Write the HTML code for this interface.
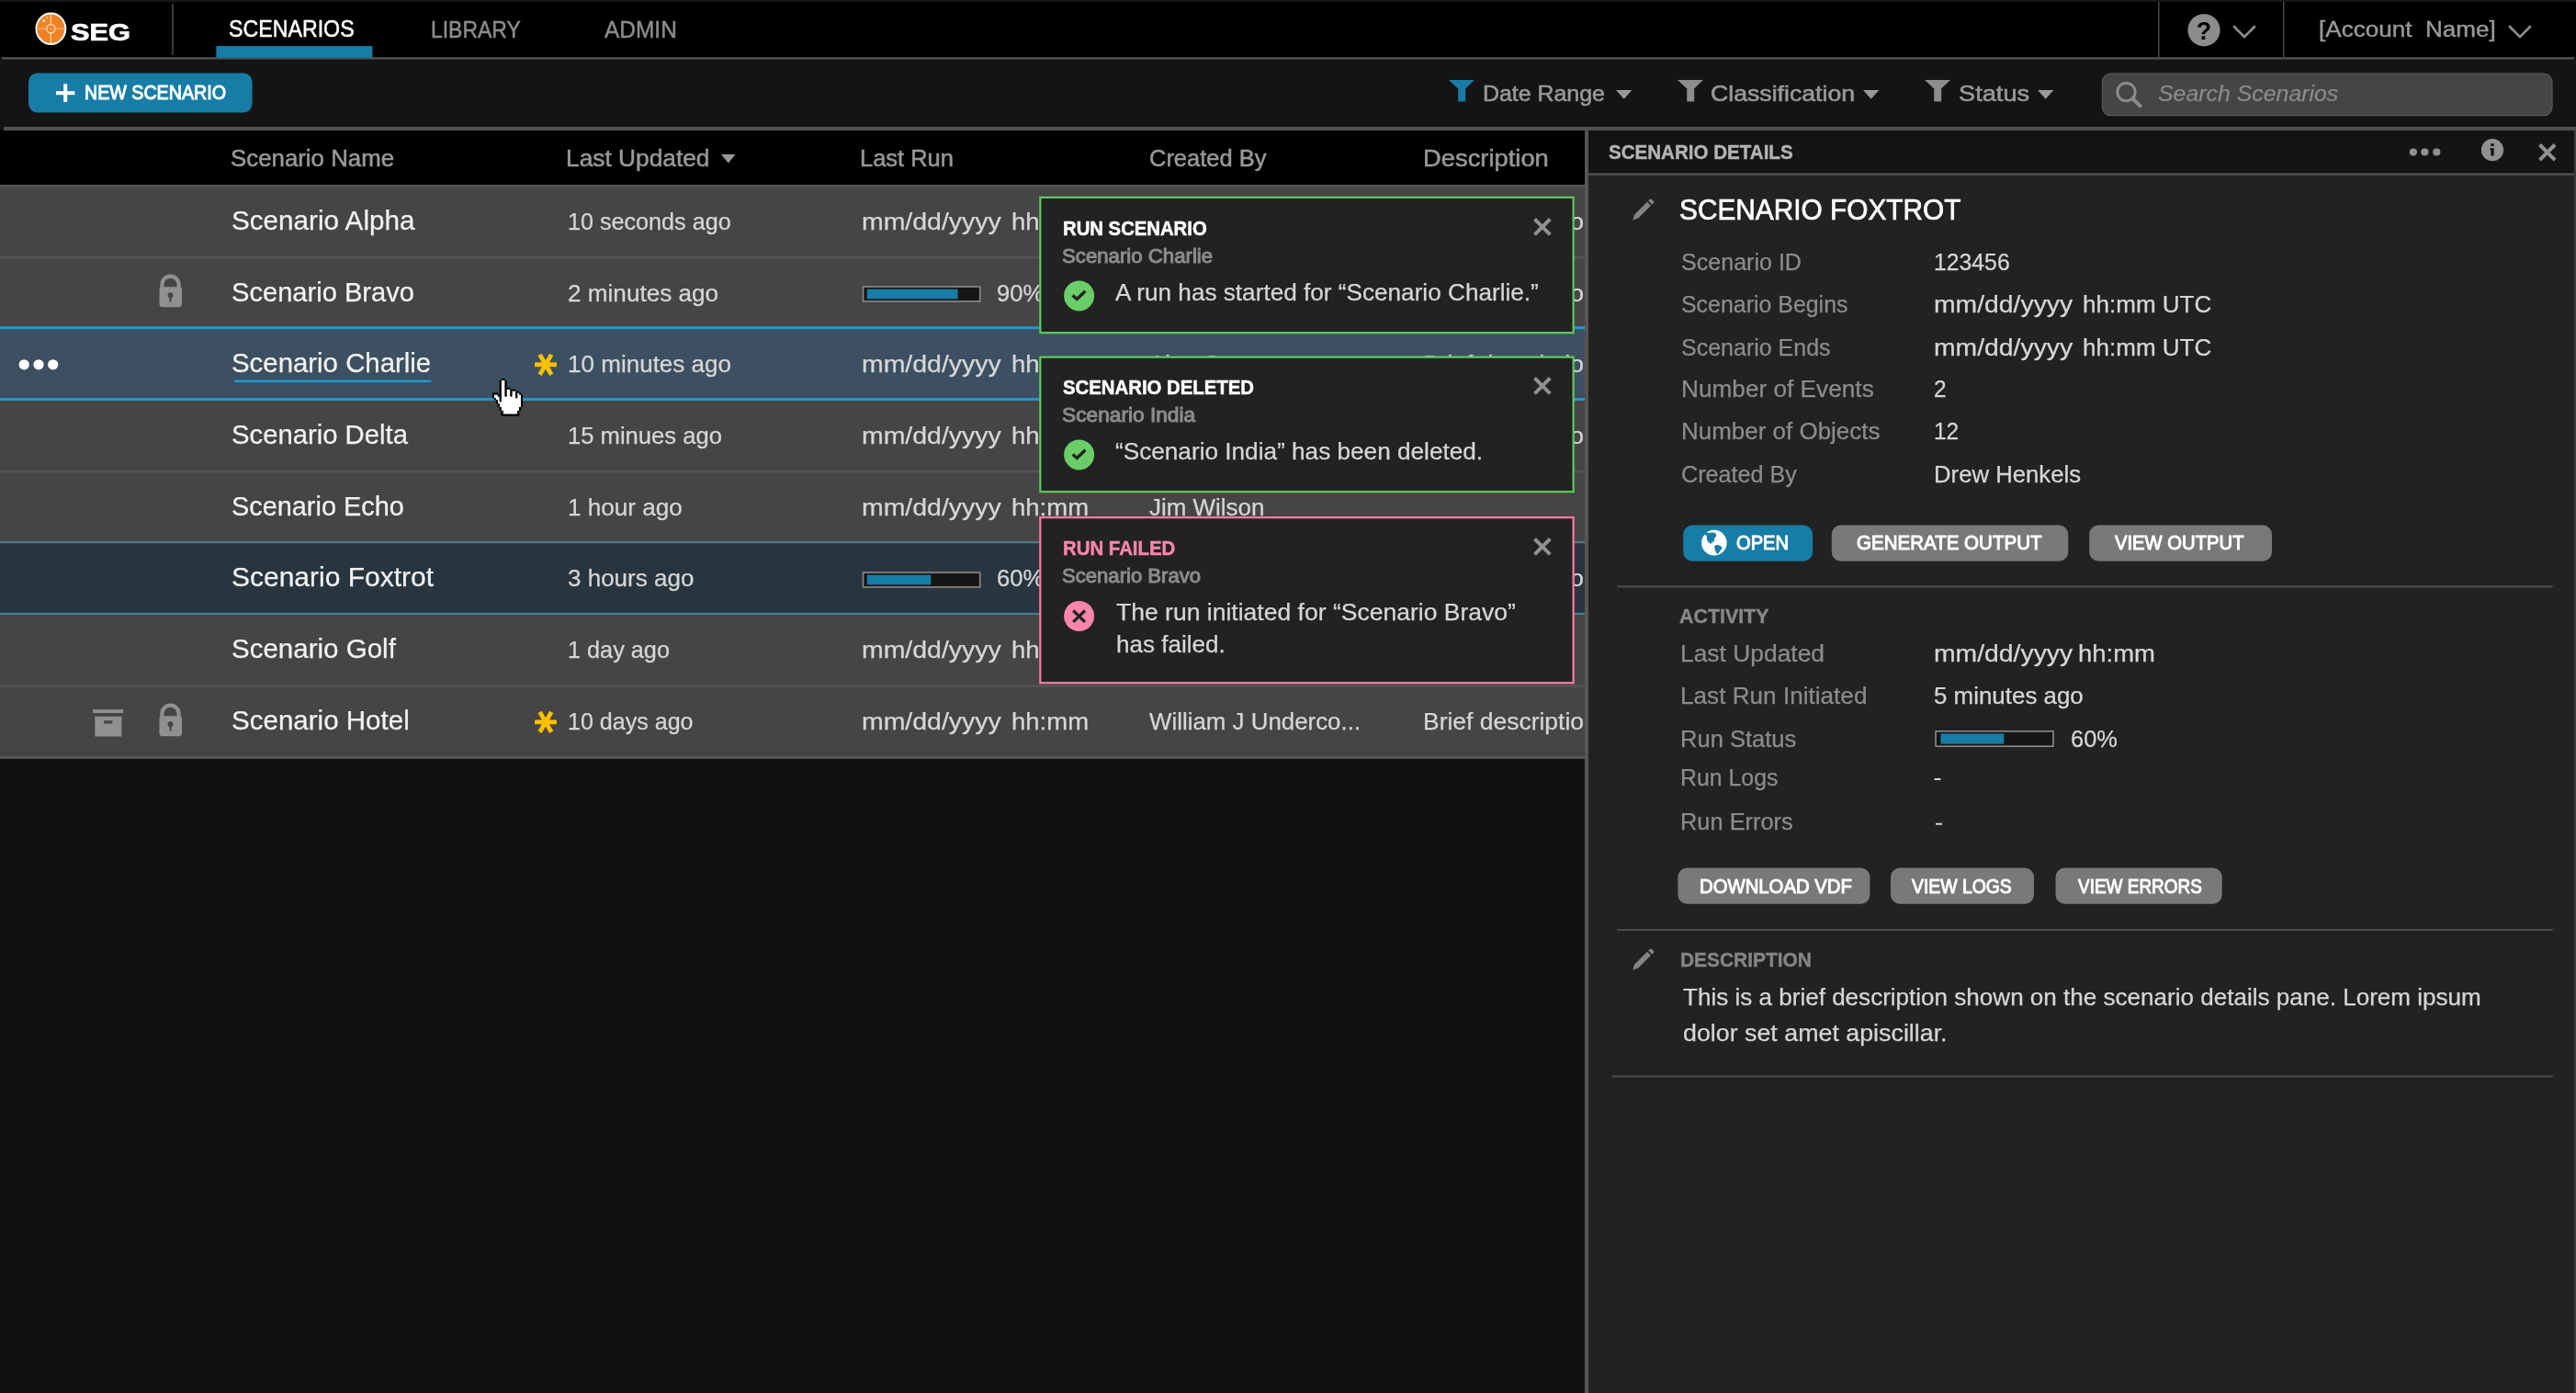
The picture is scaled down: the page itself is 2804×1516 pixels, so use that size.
<!DOCTYPE html><html><head><meta charset="utf-8"><title>Scenarios</title><style>
html,body{margin:0;padding:0;background:#111;}
body{width:2804px;height:1516px;position:relative;overflow:hidden;font-family:"Liberation Sans",sans-serif;}
.t{position:absolute;white-space:pre;line-height:1em;transform-origin:0 50%;display:block;}
svg{position:absolute;overflow:visible}
.layer{position:absolute;left:0;top:0;}
#root{position:absolute;left:0;top:0;width:2804px;height:1516px;will-change:transform;}
</style></head><body><div id="root">
<svg style="left:0px;top:0px" width="2804" height="63"><rect x="0" y="0" width="2804" height="62.3" rx="0" fill="#000"/></svg>
<svg style="left:0px;top:0px" width="2804" height="2"><rect x="0" y="0" width="2804" height="2" rx="0" fill="#181818"/></svg>
<svg style="left:2px;top:62px" width="2800" height="3"><rect x="0" y="0.2" width="2800" height="2.7" rx="0" fill="#505050"/></svg>
<svg style="left:0px;top:64px" width="2804" height="74"><rect x="0" y="0.7" width="2804" height="73.3" rx="0" fill="#141414"/></svg>
<svg style="left:4px;top:138px" width="2800" height="5"><rect x="0" y="0" width="2800" height="4.2" rx="0" fill="#505050"/></svg>
<svg style="left:0px;top:142px" width="1725" height="59"><rect x="0" y="0.2" width="1725" height="58.8" rx="0" fill="#000"/></svg>
<svg style="left:1725px;top:142px" width="5" height="1374"><rect x="0" y="0.2" width="4.2" height="1373.8" rx="0" fill="#555"/></svg>
<svg style="left:1729px;top:142px" width="1073" height="47"><rect x="0.2" y="0.2" width="1072.6" height="46.2" rx="0" fill="#141414"/></svg>
<svg style="left:1729px;top:188px" width="1073" height="3"><rect x="0.2" y="0.4" width="1072.6" height="2.5" rx="0" fill="#555"/></svg>
<svg style="left:1729px;top:190px" width="1073" height="1326"><rect x="0.2" y="0.9" width="1072.6" height="1325.1" rx="0" fill="#222"/></svg>
<svg style="left:2801px;top:142px" width="3" height="1374"><rect x="0.8" y="0.2" width="2.2" height="1373.8" rx="0" fill="#3c3c3c"/></svg>
<svg style="left:187px;top:4px" width="2" height="56"><rect x="0.2" y="0" width="1.6" height="56" rx="0" fill="#484848"/></svg>
<svg style="left:2349px;top:2px" width="2" height="60"><rect x="0" y="0" width="1.5" height="60" rx="0" fill="#484848"/></svg>
<svg style="left:2485px;top:2px" width="2" height="60"><rect x="0" y="0" width="1.5" height="60" rx="0" fill="#484848"/></svg>
<svg style="left:235px;top:50px" width="171" height="13"><rect x="0.4" y="0.1" width="169.9" height="12.7" rx="0" fill="#177ca6"/></svg>
<svg style="left:31px;top:79px" width="244" height="44"><rect x="0" y="0.4" width="243.6" height="43.2" rx="10.0" fill="#177ca6"/></svg>
<svg style="left:61px;top:99px" width="21" height="5"><rect x="0" y="0.2" width="20.4" height="4.0" rx="0" fill="#fff"/></svg>
<svg style="left:69px;top:91px" width="5" height="21"><rect x="0.2" y="0.3" width="4.0" height="19.8" rx="0" fill="#fff"/></svg>
<svg style="left:2287px;top:79px" width="492" height="48"><rect x="1.4" y="1.2" width="489.6" height="45.4" rx="9" fill="#454545" stroke="#585858" stroke-width="1.2"/></svg>
<div class="layer" style="width:1725px;height:1516px;overflow:hidden">
<svg style="left:0px;top:201px" width="1725" height="79"><rect x="0" y="0.3" width="1725" height="77.75" rx="0" fill="#454545"/></svg>
<svg style="left:0px;top:201px" width="1725" height="3"><rect x="0" y="0.0" width="1725" height="2.6" rx="0" fill="#555"/></svg>
<svg style="left:0px;top:279px" width="1725" height="78"><rect x="0" y="0.05" width="1725" height="77.75" rx="0" fill="#454545"/></svg>
<svg style="left:0px;top:278px" width="1725" height="4"><rect x="0" y="0.75" width="1725" height="2.6" rx="0" fill="#555"/></svg>
<svg style="left:0px;top:356px" width="1725" height="79"><rect x="0" y="0.8" width="1725" height="77.75" rx="0" fill="#454545"/></svg>
<svg style="left:0px;top:356px" width="1725" height="4"><rect x="0" y="0.5" width="1725" height="2.6" rx="0" fill="#555"/></svg>
<svg style="left:0px;top:434px" width="1725" height="79"><rect x="0" y="0.55" width="1725" height="77.75" rx="0" fill="#454545"/></svg>
<svg style="left:0px;top:512px" width="1725" height="79"><rect x="0" y="0.3" width="1725" height="77.75" rx="0" fill="#454545"/></svg>
<svg style="left:0px;top:511px" width="1725" height="4"><rect x="0" y="1.0" width="1725" height="2.6" rx="0" fill="#555"/></svg>
<svg style="left:0px;top:590px" width="1725" height="78"><rect x="0" y="0.05" width="1725" height="77.75" rx="0" fill="#454545"/></svg>
<svg style="left:0px;top:589px" width="1725" height="4"><rect x="0" y="0.75" width="1725" height="2.6" rx="0" fill="#555"/></svg>
<svg style="left:0px;top:667px" width="1725" height="79"><rect x="0" y="0.8" width="1725" height="77.75" rx="0" fill="#454545"/></svg>
<svg style="left:0px;top:745px" width="1725" height="79"><rect x="0" y="0.55" width="1725" height="77.75" rx="0" fill="#454545"/></svg>
<svg style="left:0px;top:745px" width="1725" height="3"><rect x="0" y="0.25" width="1725" height="2.6" rx="0" fill="#555"/></svg>
<svg style="left:0px;top:823px" width="1725" height="3"><rect x="0" y="0.0" width="1725" height="2.9" rx="0" fill="#555"/></svg>
<svg style="left:0px;top:355px" width="1725" height="81"><rect x="0" y="0.3" width="1725" height="80.7" rx="0" fill="#3d5061"/></svg>
<svg style="left:0px;top:355px" width="1725" height="4"><rect x="0" y="0.3" width="1725" height="2.9" rx="0" fill="#209bd5"/></svg>
<svg style="left:0px;top:433px" width="1725" height="3"><rect x="0" y="0.1" width="1725" height="2.9" rx="0" fill="#209bd5"/></svg>
<svg style="left:0px;top:589px" width="1725" height="81"><rect x="0" y="0.05" width="1725" height="80.05" rx="0" fill="#28353f"/></svg>
<svg style="left:0px;top:589px" width="1725" height="3"><rect x="0" y="0.05" width="1725" height="2.2" rx="0" fill="#4a7d90"/></svg>
<svg style="left:0px;top:666px" width="1725" height="4"><rect x="0" y="0.9" width="1725" height="2.2" rx="0" fill="#4a7d90"/></svg><svg style="left:173px;top:299.3px" width="26" height="36" viewBox="0 0 26 36"><path d="M3.4 16 V10.7 A9.1 9.1 0 0 1 21.6 10.7 V16" fill="none" stroke="#909090" stroke-width="4.2"/><rect x="0.5" y="13.3" width="24.6" height="21.9" rx="3.4" fill="#909090"/><circle cx="12.5" cy="22.2" r="2.9" fill="#454545"/><path d="M11.2 23 H13.8 L13.4 29.8 H11.6Z" fill="#454545"/></svg>
<svg style="left:173px;top:765.8px" width="26" height="36" viewBox="0 0 26 36"><path d="M3.4 16 V10.7 A9.1 9.1 0 0 1 21.6 10.7 V16" fill="none" stroke="#909090" stroke-width="4.2"/><rect x="0.5" y="13.3" width="24.6" height="21.9" rx="3.4" fill="#909090"/><circle cx="12.5" cy="22.2" r="2.9" fill="#454545"/><path d="M11.2 23 H13.8 L13.4 29.8 H11.6Z" fill="#454545"/></svg>
<svg style="left:101px;top:771.7px" width="34" height="30" viewBox="0 0 34 30"><rect x="0.2" y="0.1" width="33" height="3.9" fill="#909090"/><path d="M2.3 7.8 H31.4 V29.4 H2.3Z M12 12.2 V15.4 H21.4 V12.2Z" fill="#909090" fill-rule="evenodd"/></svg>
<svg style="left:582px;top:385px" width="24" height="24" viewBox="0 0 24 24"><g stroke="#ffc000" stroke-width="4.8"><line x1="0.1" y1="11.8" x2="23.9" y2="11.8"/><line x1="5.6" y1="0.9" x2="18.2" y2="22.7"/><line x1="18.2" y1="0.9" x2="5.6" y2="22.7"/></g></svg>
<svg style="left:582px;top:774.2px" width="24" height="24" viewBox="0 0 24 24"><g stroke="#ffc000" stroke-width="4.8"><line x1="0.1" y1="11.8" x2="23.9" y2="11.8"/><line x1="5.6" y1="0.9" x2="18.2" y2="22.7"/><line x1="18.2" y1="0.9" x2="5.6" y2="22.7"/></g></svg>
<svg style="left:18px;top:388px" width="50" height="18" viewBox="0 0 50 18"><circle cx="8.2" cy="8.8" r="5.6" fill="#fff"/><circle cx="24" cy="8.8" r="5.6" fill="#fff"/><circle cx="39.7" cy="8.8" r="5.6" fill="#fff"/></svg>
<svg style="left:255px;top:413px" width="215" height="3"><rect x="0" y="0.6" width="214.5" height="2.4" rx="0" fill="#1f9bd6"/></svg>
<svg style="left:938px;top:311px" width="130" height="18"><rect x="1.55" y="1.05" width="127.15" height="15.9" rx="0" fill="#161616" stroke="#8c8c8c" stroke-width="1.6"/></svg><svg style="left:943px;top:314px" width="100" height="12"><rect x="0.75" y="0.65" width="98.75" height="10.7" rx="0" fill="#177ca6"/></svg>
<svg style="left:938px;top:622px" width="130" height="18"><rect x="1.55" y="1.05" width="127.15" height="15.9" rx="0" fill="#161616" stroke="#8c8c8c" stroke-width="1.6"/></svg><svg style="left:943px;top:625px" width="71" height="12"><rect x="0.75" y="0.65" width="69.45" height="10.7" rx="0" fill="#177ca6"/></svg>
<span class="t" style="left:252.17px;top:224.85px;font-size:29.71px;color:#f2f2f2;font-weight:400;font-style:normal;transform:scaleX(0.9981);-webkit-text-stroke:0.25px #f2f2f2;">Scenario Alpha</span>
<span class="t" style="left:252.17px;top:302.56px;font-size:29.71px;color:#f2f2f2;font-weight:400;font-style:normal;transform:scaleX(0.9797);-webkit-text-stroke:0.25px #f2f2f2;">Scenario Bravo</span>
<span class="t" style="left:252.17px;top:380.27px;font-size:29.71px;color:#f2f2f2;font-weight:400;font-style:normal;transform:scaleX(0.9892);-webkit-text-stroke:0.25px #f2f2f2;">Scenario Charlie</span>
<span class="t" style="left:252.17px;top:457.98px;font-size:29.71px;color:#f2f2f2;font-weight:400;font-style:normal;transform:scaleX(0.9850);-webkit-text-stroke:0.25px #f2f2f2;">Scenario Delta</span>
<span class="t" style="left:252.17px;top:535.69px;font-size:29.71px;color:#f2f2f2;font-weight:400;font-style:normal;transform:scaleX(0.9721);-webkit-text-stroke:0.25px #f2f2f2;">Scenario Echo</span>
<span class="t" style="left:252.17px;top:613.4px;font-size:29.71px;color:#f2f2f2;font-weight:400;font-style:normal;transform:scaleX(1.0097);-webkit-text-stroke:0.25px #f2f2f2;">Scenario Foxtrot</span>
<span class="t" style="left:252.17px;top:691.11px;font-size:29.71px;color:#f2f2f2;font-weight:400;font-style:normal;transform:scaleX(0.9937);-webkit-text-stroke:0.25px #f2f2f2;">Scenario Golf</span>
<span class="t" style="left:252.17px;top:768.82px;font-size:29.71px;color:#f2f2f2;font-weight:400;font-style:normal;transform:scaleX(0.9942);-webkit-text-stroke:0.25px #f2f2f2;">Scenario Hotel</span>
<span class="t" style="left:618.22px;top:228.79px;font-size:25.07px;color:#d6d6d6;font-weight:400;font-style:normal;transform:scaleX(1.0037);-webkit-text-stroke:0.25px #d6d6d6;">10 seconds ago</span>
<span class="t" style="left:618.22px;top:306.5px;font-size:25.07px;color:#d6d6d6;font-weight:400;font-style:normal;transform:scaleX(1.0424);-webkit-text-stroke:0.25px #d6d6d6;">2 minutes ago</span>
<span class="t" style="left:618.22px;top:384.21px;font-size:25.07px;color:#d6d6d6;font-weight:400;font-style:normal;transform:scaleX(1.0389);-webkit-text-stroke:0.25px #d6d6d6;">10 minutes ago</span>
<span class="t" style="left:618.22px;top:461.92px;font-size:25.07px;color:#d6d6d6;font-weight:400;font-style:normal;transform:scaleX(1.0211);-webkit-text-stroke:0.25px #d6d6d6;">15 minues ago</span>
<span class="t" style="left:618.22px;top:539.63px;font-size:25.07px;color:#d6d6d6;font-weight:400;font-style:normal;transform:scaleX(1.0422);-webkit-text-stroke:0.25px #d6d6d6;">1 hour ago</span>
<span class="t" style="left:618.22px;top:617.34px;font-size:25.07px;color:#d6d6d6;font-weight:400;font-style:normal;transform:scaleX(1.0376);-webkit-text-stroke:0.25px #d6d6d6;">3 hours ago</span>
<span class="t" style="left:618.22px;top:695.05px;font-size:25.07px;color:#d6d6d6;font-weight:400;font-style:normal;transform:scaleX(1.0078);-webkit-text-stroke:0.25px #d6d6d6;">1 day ago</span>
<span class="t" style="left:618.22px;top:772.76px;font-size:25.07px;color:#d6d6d6;font-weight:400;font-style:normal;transform:scaleX(0.9997);-webkit-text-stroke:0.25px #d6d6d6;">10 days ago</span>
<span class="t" style="left:937.62px;top:228.79px;font-size:25.07px;color:#d6d6d6;font-weight:400;font-style:normal;transform:scaleX(1.1344);-webkit-text-stroke:0.25px #d6d6d6;">mm/dd/yyyy</span>
<span class="t" style="left:1100.82px;top:228.79px;font-size:25.07px;color:#d6d6d6;font-weight:400;font-style:normal;transform:scaleX(1.0982);-webkit-text-stroke:0.25px #d6d6d6;">hh:mm</span>
<span class="t" style="left:937.62px;top:384.21px;font-size:25.07px;color:#d6d6d6;font-weight:400;font-style:normal;transform:scaleX(1.1344);-webkit-text-stroke:0.25px #d6d6d6;">mm/dd/yyyy</span>
<span class="t" style="left:1100.82px;top:384.21px;font-size:25.07px;color:#d6d6d6;font-weight:400;font-style:normal;transform:scaleX(1.0982);-webkit-text-stroke:0.25px #d6d6d6;">hh:mm</span>
<span class="t" style="left:937.62px;top:461.92px;font-size:25.07px;color:#d6d6d6;font-weight:400;font-style:normal;transform:scaleX(1.1344);-webkit-text-stroke:0.25px #d6d6d6;">mm/dd/yyyy</span>
<span class="t" style="left:1100.82px;top:461.92px;font-size:25.07px;color:#d6d6d6;font-weight:400;font-style:normal;transform:scaleX(1.0982);-webkit-text-stroke:0.25px #d6d6d6;">hh:mm</span>
<span class="t" style="left:937.62px;top:539.63px;font-size:25.07px;color:#d6d6d6;font-weight:400;font-style:normal;transform:scaleX(1.1344);-webkit-text-stroke:0.25px #d6d6d6;">mm/dd/yyyy</span>
<span class="t" style="left:1100.82px;top:539.63px;font-size:25.07px;color:#d6d6d6;font-weight:400;font-style:normal;transform:scaleX(1.0982);-webkit-text-stroke:0.25px #d6d6d6;">hh:mm</span>
<span class="t" style="left:937.62px;top:695.05px;font-size:25.07px;color:#d6d6d6;font-weight:400;font-style:normal;transform:scaleX(1.1344);-webkit-text-stroke:0.25px #d6d6d6;">mm/dd/yyyy</span>
<span class="t" style="left:1100.82px;top:695.05px;font-size:25.07px;color:#d6d6d6;font-weight:400;font-style:normal;transform:scaleX(1.0982);-webkit-text-stroke:0.25px #d6d6d6;">hh:mm</span>
<span class="t" style="left:937.62px;top:772.76px;font-size:25.07px;color:#d6d6d6;font-weight:400;font-style:normal;transform:scaleX(1.1344);-webkit-text-stroke:0.25px #d6d6d6;">mm/dd/yyyy</span>
<span class="t" style="left:1100.82px;top:772.76px;font-size:25.07px;color:#d6d6d6;font-weight:400;font-style:normal;transform:scaleX(1.0982);-webkit-text-stroke:0.25px #d6d6d6;">hh:mm</span>
<span class="t" style="left:1250.62px;top:228.79px;font-size:25.07px;color:#d6d6d6;font-weight:400;font-style:normal;transform:scaleX(1.0352);-webkit-text-stroke:0.25px #d6d6d6;">Jim Wilson</span>
<span class="t" style="left:1548.62px;top:228.79px;font-size:25.07px;color:#d6d6d6;font-weight:400;font-style:normal;transform:scaleX(1.0558);-webkit-text-stroke:0.25px #d6d6d6;">Brief descriptio</span>
<span class="t" style="left:1250.62px;top:306.5px;font-size:25.07px;color:#d6d6d6;font-weight:400;font-style:normal;transform:scaleX(1.0273);-webkit-text-stroke:0.25px #d6d6d6;">Drew Henkels</span>
<span class="t" style="left:1548.62px;top:306.5px;font-size:25.07px;color:#d6d6d6;font-weight:400;font-style:normal;transform:scaleX(1.0558);-webkit-text-stroke:0.25px #d6d6d6;">Brief descriptio</span>
<span class="t" style="left:1250.62px;top:384.21px;font-size:25.07px;color:#d6d6d6;font-weight:400;font-style:normal;transform:scaleX(1.0257);-webkit-text-stroke:0.25px #d6d6d6;">Alan Green</span>
<span class="t" style="left:1548.62px;top:384.21px;font-size:25.07px;color:#d6d6d6;font-weight:400;font-style:normal;transform:scaleX(1.0558);-webkit-text-stroke:0.25px #d6d6d6;">Brief descriptio</span>
<span class="t" style="left:1250.62px;top:461.92px;font-size:25.07px;color:#d6d6d6;font-weight:400;font-style:normal;transform:scaleX(1.0352);-webkit-text-stroke:0.25px #d6d6d6;">Jim Wilson</span>
<span class="t" style="left:1548.62px;top:461.92px;font-size:25.07px;color:#d6d6d6;font-weight:400;font-style:normal;transform:scaleX(1.0558);-webkit-text-stroke:0.25px #d6d6d6;">Brief descriptio</span>
<span class="t" style="left:1250.62px;top:539.63px;font-size:25.07px;color:#d6d6d6;font-weight:400;font-style:normal;transform:scaleX(1.0352);-webkit-text-stroke:0.25px #d6d6d6;">Jim Wilson</span>
<span class="t" style="left:1250.62px;top:617.34px;font-size:25.07px;color:#d6d6d6;font-weight:400;font-style:normal;transform:scaleX(1.0273);-webkit-text-stroke:0.25px #d6d6d6;">Drew Henkels</span>
<span class="t" style="left:1548.62px;top:617.34px;font-size:25.07px;color:#d6d6d6;font-weight:400;font-style:normal;transform:scaleX(1.0558);-webkit-text-stroke:0.25px #d6d6d6;">Brief descriptio</span>
<span class="t" style="left:1250.62px;top:695.05px;font-size:25.07px;color:#d6d6d6;font-weight:400;font-style:normal;transform:scaleX(1.0384);-webkit-text-stroke:0.25px #d6d6d6;">Sara Cole</span>
<span class="t" style="left:1250.62px;top:772.76px;font-size:25.07px;color:#d6d6d6;font-weight:400;font-style:normal;transform:scaleX(1.0326);-webkit-text-stroke:0.25px #d6d6d6;">William J Underco...</span>
<span class="t" style="left:1548.62px;top:772.76px;font-size:25.07px;color:#d6d6d6;font-weight:400;font-style:normal;transform:scaleX(1.0558);-webkit-text-stroke:0.25px #d6d6d6;">Brief descriptio</span>
<span class="t" style="left:1084.62px;top:306.5px;font-size:25.07px;color:#d6d6d6;font-weight:400;font-style:normal;transform:scaleX(1.0202);-webkit-text-stroke:0.25px #d6d6d6;">90%</span>
<span class="t" style="left:1084.62px;top:617.34px;font-size:25.07px;color:#d6d6d6;font-weight:400;font-style:normal;transform:scaleX(1.0202);-webkit-text-stroke:0.25px #d6d6d6;">60%</span>
<span class="t" style="left:250.6px;top:160.22px;font-size:25.51px;color:#999;font-weight:400;font-style:normal;transform:scaleX(1.0130);-webkit-text-stroke:0.5px #999;">Scenario Name</span>
<span class="t" style="left:616.1px;top:160.22px;font-size:25.51px;color:#999;font-weight:400;font-style:normal;transform:scaleX(1.0315);-webkit-text-stroke:0.5px #999;">Last Updated</span>
<span class="t" style="left:936.1px;top:160.22px;font-size:25.51px;color:#999;font-weight:400;font-style:normal;transform:scaleX(0.9979);-webkit-text-stroke:0.5px #999;">Last Run</span>
<span class="t" style="left:1251.1px;top:160.22px;font-size:25.51px;color:#999;font-weight:400;font-style:normal;transform:scaleX(0.9984);-webkit-text-stroke:0.5px #999;">Created By</span>
<span class="t" style="left:1548.6px;top:160.22px;font-size:25.51px;color:#999;font-weight:400;font-style:normal;transform:scaleX(1.0726);-webkit-text-stroke:0.5px #999;">Description</span>
</div>
<svg style="left:38px;top:13px" width="36" height="36" viewBox="0 0 36 36"><ellipse cx="17.4" cy="18.3" rx="15.9" ry="16.8" fill="#f08222" stroke="#fff" stroke-width="2"/>
<g stroke="#fbd9b8" stroke-width="1.2" fill="none"><line x1="17.4" y1="2.5" x2="17.4" y2="13.5"/><line x1="17.4" y1="23" x2="17.4" y2="34"/><line x1="2.5" y1="18.2" x2="12.6" y2="18.2" stroke="#f7b078"/><line x1="22.2" y1="18.2" x2="32.5" y2="18.2" stroke="#f7b078"/><circle cx="17.4" cy="18.2" r="4.6" stroke="#fde6d0" stroke-width="1.3"/><path d="M8 6.5 A15 15 0 0 0 8 30" stroke="#f7b078" stroke-width="1"/></g><circle cx="9.8" cy="9.4" r="1.5" fill="#fde6d0"/><circle cx="13.6" cy="6.4" r="0.9" fill="#fbd3ad"/><circle cx="17.4" cy="18.2" r="1.3" fill="#f7b078"/></svg>
<svg style="left:2381px;top:15.4px" width="36" height="36" viewBox="0 0 36 36"><circle cx="18" cy="17.8" r="17.6" fill="#8c8c8c"/><text x="18" y="27.5" font-family="Liberation Sans" font-weight="700" font-size="27" text-anchor="middle" fill="#000">?</text></svg>
<svg style="left:2428px;top:24px" width="32" height="22" viewBox="0 0 32 22"><polyline points="3.2,4.3 15,16.2 26.8,4.3" fill="none" stroke="#8c8c8c" stroke-width="2.7"/></svg>
<svg style="left:2727.8px;top:24px" width="32" height="22" viewBox="0 0 32 22"><polyline points="3.2,4.3 15,16.2 26.8,4.3" fill="none" stroke="#8c8c8c" stroke-width="2.7"/></svg>
<svg style="left:1577px;top:87.4px" width="28" height="24" viewBox="0 0 28 24"><path d="M0 0 H28 L18.2 9.6 V23.6 H10.2 V9.6 Z" fill="#177ca6"/></svg>
<svg style="left:1825.7px;top:87.4px" width="28" height="24" viewBox="0 0 28 24"><path d="M0 0 H28 L18.2 9.6 V23.6 H10.2 V9.6 Z" fill="#8c8c8c"/></svg>
<svg style="left:2095px;top:87.4px" width="28" height="24" viewBox="0 0 28 24"><path d="M0 0 H28 L18.2 9.6 V23.6 H10.2 V9.6 Z" fill="#8c8c8c"/></svg>
<svg style="left:1758.5px;top:97.6px" width="17.4" height="9.7" viewBox="0 0 17.4 9.7"><path d="M0 0 H17.4 L8.7 9.7Z" fill="#999"/></svg>
<svg style="left:2027.7px;top:97.6px" width="17.4" height="9.7" viewBox="0 0 17.4 9.7"><path d="M0 0 H17.4 L8.7 9.7Z" fill="#999"/></svg>
<svg style="left:2218.3px;top:97.6px" width="17.4" height="9.7" viewBox="0 0 17.4 9.7"><path d="M0 0 H17.4 L8.7 9.7Z" fill="#999"/></svg>
<svg style="left:784.5px;top:167.5px" width="15.5" height="9.5" viewBox="0 0 15.5 9.5"><path d="M0 0 H15.5 L7.75 9.5Z" fill="#999"/></svg>
<svg style="left:2303px;top:88px" width="30" height="30" viewBox="0 0 30 30"><circle cx="11.5" cy="12.2" r="9.7" fill="none" stroke="#8c8c8c" stroke-width="2.9"/><line x1="18.6" y1="19.4" x2="26.6" y2="27.4" stroke="#8c8c8c" stroke-width="4" stroke-linecap="round"/></svg>
<svg style="left:2620px;top:158px" width="40" height="16" viewBox="0 0 40 16"><circle cx="6.9" cy="7.5" r="4.1" fill="#909090"/><circle cx="19.4" cy="7.5" r="4.1" fill="#909090"/><circle cx="32.3" cy="7.5" r="4.1" fill="#909090"/></svg>
<svg style="left:2700px;top:151px" width="26" height="26" viewBox="0 0 26 26"><circle cx="13" cy="12.2" r="12.1" fill="#909090"/><rect x="11.2" y="5.2" width="3.4" height="2.9" fill="#141414"/><path d="M10.3 10.2 H14.7 V18.4 H11.3 V12 H10.3Z" fill="#141414"/></svg>
<svg style="left:2763px;top:156px" width="19.6" height="19.6" viewBox="0 0 19.6 19.6"><path d="M1.5 1.5 L18.1 18.1 M18.1 1.5 L1.5 18.1" stroke="#909090" stroke-width="4.1" fill="none"/></svg>
<svg style="left:1777.4px;top:215.7px" width="24" height="24" viewBox="0 0 24 24"><path d="M0.2 23.6 L2.2 17.6 L16 3.8 L20 7.8 L6.2 21.6 Z M17.2 2.6 L18.9 0.9 Q19.9 0 20.9 0.9 L22.9 2.9 Q23.8 3.9 22.9 4.9 L21.2 6.6 Z" fill="#858585"/></svg>
<svg style="left:1777.4px;top:1032.4px" width="24" height="24" viewBox="0 0 24 24"><path d="M0.2 23.6 L2.2 17.6 L16 3.8 L20 7.8 L6.2 21.6 Z M17.2 2.6 L18.9 0.9 Q19.9 0 20.9 0.9 L22.9 2.9 Q23.8 3.9 22.9 4.9 L21.2 6.6 Z" fill="#858585"/></svg>
<svg style="left:1832px;top:571px" width="142" height="40"><rect x="0.2" y="0.6" width="140.9" height="39.1" rx="10.0" fill="#177ca6"/></svg>
<svg style="left:1993px;top:571px" width="259" height="40"><rect x="0.75" y="0.6" width="257.5" height="39.1" rx="10.0" fill="#797979"/></svg>
<svg style="left:2274px;top:571px" width="199" height="40"><rect x="0.25" y="0.6" width="198.75" height="39.1" rx="10.0" fill="#797979"/></svg>
<svg style="left:1826px;top:944px" width="210" height="40"><rect x="0.4" y="0.6" width="209.0" height="39.2" rx="10.0" fill="#797979"/></svg>
<svg style="left:2058px;top:944px" width="156" height="40"><rect x="0" y="0.6" width="156" height="39.2" rx="10.0" fill="#797979"/></svg>
<svg style="left:2237px;top:944px" width="182" height="40"><rect x="0.5" y="0.6" width="181.25" height="39.2" rx="10.0" fill="#797979"/></svg>
<svg style="left:1851.5px;top:577.2px" width="28" height="28" viewBox="0 0 28 28"><circle cx="13.85" cy="13.65" r="13.8" fill="#fff"/><path d="M5.8 6 L3 4.4 L5 2.2 L7.8 3 Q11.5 1.9 14.2 2.8 Q16.4 3.6 16.3 6.2 Q15.2 8 13.7 9.2 Q14.6 10.6 13.9 12 Q12.4 13.6 11.6 13.9 Q10.2 14.9 9.2 14.2 Q7.2 13 6.6 11.4 Q5.4 8.6 5.8 6Z M14.4 17 Q16.2 15.8 18.4 16.2 Q21 17 22.6 18.6 Q22.4 20.4 21.2 21.6 Q19.8 23.6 18.2 25.2 Q17.2 26.4 16.5 25.6 Q15.8 23.6 14.9 21.8 Q13.6 19.4 14.4 17Z" fill="#177ca6"/><circle cx="11.7" cy="12.6" r="0.7" fill="#fff"/></svg>
<svg style="left:1760px;top:637px" width="1019" height="3"><rect x="0.5" y="0.3" width="1018.25" height="2.1" rx="0" fill="#4c4c4c"/></svg>
<svg style="left:1760px;top:1011px" width="1019" height="2"><rect x="0.5" y="0" width="1018.25" height="2" rx="0" fill="#4c4c4c"/></svg>
<svg style="left:1754px;top:1170px" width="1025" height="3"><rect x="0.5" y="0.4" width="1024.25" height="2.0" rx="0" fill="#4c4c4c"/></svg>
<svg style="left:2106px;top:795px" width="130" height="18"><rect x="1.05" y="0.8" width="127.9" height="16.4" rx="0" fill="#161616" stroke="#8c8c8c" stroke-width="1.6"/></svg><svg style="left:2112px;top:798px" width="70" height="12"><rect x="0.5" y="0.4" width="68.75" height="11.2" rx="0" fill="#177ca6"/></svg>
<svg style="left:2105px;top:847px" width="8" height="2"><rect x="0.5" y="0" width="7.0" height="2" rx="0" fill="#d6d6d6"/></svg>
<svg style="left:2107px;top:895px" width="7" height="3"><rect x="0" y="0.7" width="7" height="2.0" rx="0" fill="#d6d6d6"/></svg>
<span class="t" style="left:76.61px;top:22.66px;font-size:25.22px;color:#fff;font-weight:700;font-style:normal;transform:scaleX(1.2221);-webkit-text-stroke:0.7px #fff;">SEG</span>
<span class="t" style="left:248.96px;top:17.6px;font-size:26.23px;color:#fff;font-weight:400;font-style:normal;transform:scaleX(0.8848);-webkit-text-stroke:0.5px #fff;">SCENARIOS</span>
<span class="t" style="left:469.46px;top:18.9px;font-size:26.23px;color:#8c8c8c;font-weight:400;font-style:normal;transform:scaleX(0.8746);-webkit-text-stroke:0.5px #8c8c8c;">LIBRARY</span>
<span class="t" style="left:657.56px;top:18.9px;font-size:26.23px;color:#8c8c8c;font-weight:400;font-style:normal;transform:scaleX(0.9329);-webkit-text-stroke:0.5px #8c8c8c;">ADMIN</span>
<span class="t" style="left:2523.64px;top:19.76px;font-size:24.64px;color:#999;font-weight:400;font-style:normal;transform:scaleX(1.0589);-webkit-text-stroke:0.4px #999;">[Account  Name]</span>
<span class="t" style="left:91.63px;top:91.19px;font-size:21.3px;color:#fff;font-weight:400;font-style:normal;transform:scaleX(0.9229);-webkit-text-stroke:1.0px #fff;">NEW SCENARIO</span>
<span class="t" style="left:1614.14px;top:90.24px;font-size:24.78px;color:#999;font-weight:400;font-style:normal;transform:scaleX(1.0055);-webkit-text-stroke:0.6px #999;">Date Range</span>
<span class="t" style="left:1861.64px;top:90.24px;font-size:24.78px;color:#999;font-weight:400;font-style:normal;transform:scaleX(1.0769);-webkit-text-stroke:0.6px #999;">Classification</span>
<span class="t" style="left:2131.64px;top:90.24px;font-size:24.78px;color:#999;font-weight:400;font-style:normal;transform:scaleX(1.0990);-webkit-text-stroke:0.6px #999;">Status</span>
<span class="t" style="left:2348.64px;top:90.26px;font-size:24.64px;color:#8a8a8a;font-weight:400;font-style:italic;transform:scaleX(1.0099);-webkit-text-stroke:0.25px #8a8a8a;">Search Scenarios</span>
<span class="t" style="left:1750.59px;top:155.11px;font-size:21.16px;color:#b4b4b4;font-weight:700;font-style:normal;transform:scaleX(0.9716);-webkit-text-stroke:0.4px #b4b4b4;">SCENARIO DETAILS</span>
<span class="t" style="left:1828.27px;top:212.56px;font-size:31.52px;color:#fff;font-weight:400;font-style:normal;transform:scaleX(0.9462);-webkit-text-stroke:0.7px #fff;">SCENARIO FOXTROT</span>
<span class="t" style="left:1829.63px;top:272.66px;font-size:24.93px;color:#8c8c8c;font-weight:400;font-style:normal;transform:scaleX(1.0057);-webkit-text-stroke:0.25px #8c8c8c;">Scenario ID</span>
<span class="t" style="left:2104.63px;top:272.66px;font-size:24.93px;color:#d6d6d6;font-weight:400;font-style:normal;transform:scaleX(0.9939);-webkit-text-stroke:0.25px #d6d6d6;">123456</span>
<span class="t" style="left:1829.63px;top:319.41px;font-size:24.93px;color:#8c8c8c;font-weight:400;font-style:normal;transform:scaleX(0.9999);-webkit-text-stroke:0.25px #8c8c8c;">Scenario Begins</span>
<span class="t" style="left:2104.63px;top:319.41px;font-size:24.93px;color:#d6d6d6;font-weight:400;font-style:normal;transform:scaleX(1.1371);-webkit-text-stroke:0.25px #d6d6d6;">mm/dd/yyyy</span>
<span class="t" style="left:2267.13px;top:319.41px;font-size:24.93px;color:#d6d6d6;font-weight:400;font-style:normal;transform:scaleX(1.0447);-webkit-text-stroke:0.25px #d6d6d6;">hh:mm UTC</span>
<span class="t" style="left:1829.63px;top:365.66px;font-size:24.93px;color:#8c8c8c;font-weight:400;font-style:normal;transform:scaleX(1.0030);-webkit-text-stroke:0.25px #8c8c8c;">Scenario Ends</span>
<span class="t" style="left:2104.63px;top:365.66px;font-size:24.93px;color:#d6d6d6;font-weight:400;font-style:normal;transform:scaleX(1.1371);-webkit-text-stroke:0.25px #d6d6d6;">mm/dd/yyyy</span>
<span class="t" style="left:2267.13px;top:365.66px;font-size:24.93px;color:#d6d6d6;font-weight:400;font-style:normal;transform:scaleX(1.0447);-webkit-text-stroke:0.25px #d6d6d6;">hh:mm UTC</span>
<span class="t" style="left:1829.63px;top:410.66px;font-size:24.93px;color:#8c8c8c;font-weight:400;font-style:normal;transform:scaleX(1.0515);-webkit-text-stroke:0.25px #8c8c8c;">Number of Events</span>
<span class="t" style="left:2104.63px;top:410.66px;font-size:24.93px;color:#d6d6d6;font-weight:400;font-style:normal;transform:scaleX(0.9814);-webkit-text-stroke:0.25px #d6d6d6;">2</span>
<span class="t" style="left:1829.63px;top:456.91px;font-size:24.93px;color:#8c8c8c;font-weight:400;font-style:normal;transform:scaleX(1.0420);-webkit-text-stroke:0.25px #8c8c8c;">Number of Objects</span>
<span class="t" style="left:2104.63px;top:456.91px;font-size:24.93px;color:#d6d6d6;font-weight:400;font-style:normal;transform:scaleX(0.9818);-webkit-text-stroke:0.25px #d6d6d6;">12</span>
<span class="t" style="left:1829.63px;top:504.41px;font-size:24.93px;color:#8c8c8c;font-weight:400;font-style:normal;transform:scaleX(1.0099);-webkit-text-stroke:0.25px #8c8c8c;">Created By</span>
<span class="t" style="left:2104.63px;top:504.41px;font-size:24.93px;color:#d6d6d6;font-weight:400;font-style:normal;transform:scaleX(1.0322);-webkit-text-stroke:0.25px #d6d6d6;">Drew Henkels</span>
<span class="t" style="left:1890.06px;top:580.45px;font-size:21.59px;color:#fff;font-weight:400;font-style:normal;transform:scaleX(0.9336);-webkit-text-stroke:1.0px #fff;">OPEN</span>
<span class="t" style="left:2020.81px;top:580.45px;font-size:21.59px;color:#fff;font-weight:400;font-style:normal;transform:scaleX(0.9514);-webkit-text-stroke:1.0px #fff;">GENERATE OUTPUT</span>
<span class="t" style="left:2302.06px;top:580.45px;font-size:21.59px;color:#fff;font-weight:400;font-style:normal;transform:scaleX(0.9380);-webkit-text-stroke:1.0px #fff;">VIEW OUTPUT</span>
<span class="t" style="left:1827.66px;top:660.11px;font-size:22.46px;color:#888;font-weight:700;font-style:normal;transform:scaleX(0.9523);-webkit-text-stroke:0.4px #888;">ACTIVITY</span>
<span class="t" style="left:1828.63px;top:698.66px;font-size:24.93px;color:#8c8c8c;font-weight:400;font-style:normal;transform:scaleX(1.0591);-webkit-text-stroke:0.25px #8c8c8c;">Last Updated</span>
<span class="t" style="left:2104.63px;top:698.66px;font-size:24.93px;color:#d6d6d6;font-weight:400;font-style:normal;transform:scaleX(1.1371);-webkit-text-stroke:0.25px #d6d6d6;">mm/dd/yyyy</span>
<span class="t" style="left:2262.13px;top:698.66px;font-size:24.93px;color:#d6d6d6;font-weight:400;font-style:normal;transform:scaleX(1.1018);-webkit-text-stroke:0.25px #d6d6d6;">hh:mm</span>
<span class="t" style="left:1828.63px;top:744.91px;font-size:24.93px;color:#8c8c8c;font-weight:400;font-style:normal;transform:scaleX(1.0489);-webkit-text-stroke:0.25px #8c8c8c;">Last Run Initiated</span>
<span class="t" style="left:2104.63px;top:744.91px;font-size:24.93px;color:#d6d6d6;font-weight:400;font-style:normal;transform:scaleX(1.0397);-webkit-text-stroke:0.25px #d6d6d6;">5 minutes ago</span>
<span class="t" style="left:1828.63px;top:791.66px;font-size:24.93px;color:#8c8c8c;font-weight:400;font-style:normal;transform:scaleX(1.0243);-webkit-text-stroke:0.25px #8c8c8c;">Run Status</span>
<span class="t" style="left:1828.63px;top:834.16px;font-size:24.93px;color:#8c8c8c;font-weight:400;font-style:normal;transform:scaleX(0.9976);-webkit-text-stroke:0.25px #8c8c8c;">Run Logs</span>
<span class="t" style="left:1828.63px;top:881.66px;font-size:24.93px;color:#8c8c8c;font-weight:400;font-style:normal;transform:scaleX(1.0187);-webkit-text-stroke:0.25px #8c8c8c;">Run Errors</span>
<span class="t" style="left:2253.63px;top:791.66px;font-size:24.93px;color:#d6d6d6;font-weight:400;font-style:normal;transform:scaleX(1.0198);-webkit-text-stroke:0.25px #d6d6d6;">60%</span>
<span class="t" style="left:1850.06px;top:954.05px;font-size:21.59px;color:#fff;font-weight:400;font-style:normal;transform:scaleX(0.9415);-webkit-text-stroke:1.0px #fff;">DOWNLOAD VDF</span>
<span class="t" style="left:2080.81px;top:954.05px;font-size:21.59px;color:#fff;font-weight:400;font-style:normal;transform:scaleX(0.8983);-webkit-text-stroke:1.0px #fff;">VIEW LOGS</span>
<span class="t" style="left:2261.81px;top:954.05px;font-size:21.59px;color:#fff;font-weight:400;font-style:normal;transform:scaleX(0.8788);-webkit-text-stroke:1.0px #fff;">VIEW ERRORS</span>
<span class="t" style="left:1828.8px;top:1033.62px;font-size:21.74px;color:#858585;font-weight:700;font-style:normal;transform:scaleX(0.9621);-webkit-text-stroke:0.4px #858585;">DESCRIPTION</span>
<span class="t" style="left:1832.1px;top:1073.17px;font-size:25.51px;color:#d6d6d6;font-weight:400;font-style:normal;transform:scaleX(1.0215);-webkit-text-stroke:0.25px #d6d6d6;">This is a brief description shown on the scenario details pane. Lorem ipsum</span>
<span class="t" style="left:1831.6px;top:1112.42px;font-size:25.51px;color:#d6d6d6;font-weight:400;font-style:normal;transform:scaleX(1.0512);-webkit-text-stroke:0.25px #d6d6d6;">dolor set amet apiscillar.</span>
<svg style="left:1131px;top:213px" width="583" height="151"><rect x="1.35" y="1.85" width="580.3" height="147.3" rx="0" fill="#222" stroke="#5ec45e" stroke-width="2.3"/></svg>
<svg style="left:1131px;top:387px" width="583" height="150"><rect x="1.35" y="1.65" width="580.3" height="146.5" rx="0" fill="#222" stroke="#5ec45e" stroke-width="2.3"/></svg>
<svg style="left:1131px;top:562px" width="583" height="183"><rect x="1.35" y="1.15" width="580.3" height="180.0" rx="0" fill="#222" stroke="#f4799c" stroke-width="2.3"/></svg>
<svg style="left:1158.2px;top:306.2px" width="34" height="34" viewBox="0 0 34 34"><circle cx="16.6" cy="15.9" r="16.5" fill="#6acd68"/><polyline points="9.6,15.4 14.3,19.5 23.4,10.7" fill="none" stroke="#222" stroke-width="3.3"/></svg>
<svg style="left:1158.2px;top:479px" width="34" height="34" viewBox="0 0 34 34"><circle cx="16.6" cy="15.9" r="16.5" fill="#6acd68"/><polyline points="9.6,15.4 14.3,19.5 23.4,10.7" fill="none" stroke="#222" stroke-width="3.3"/></svg>
<svg style="left:1158.2px;top:653.5px" width="34" height="34" viewBox="0 0 34 34"><circle cx="16.6" cy="16.5" r="16.5" fill="#f985ab"/><path d="M10.2 10.5 L23 22.9 M23 10.5 L10.2 22.9" stroke="#222" stroke-width="3.2" fill="none"/></svg>
<svg style="left:1668.6px;top:237px" width="19.8" height="19.8" viewBox="0 0 19.8 19.8"><path d="M1.5 1.5 L18.3 18.3 M18.3 1.5 L1.5 18.3" stroke="#909090" stroke-width="3.9" fill="none"/></svg>
<svg style="left:1668.6px;top:410.3px" width="19.8" height="19.8" viewBox="0 0 19.8 19.8"><path d="M1.5 1.5 L18.3 18.3 M18.3 1.5 L1.5 18.3" stroke="#909090" stroke-width="3.9" fill="none"/></svg>
<svg style="left:1668.6px;top:585.3px" width="19.8" height="19.8" viewBox="0 0 19.8 19.8"><path d="M1.5 1.5 L18.3 18.3 M18.3 1.5 L1.5 18.3" stroke="#909090" stroke-width="3.9" fill="none"/></svg>
<span class="t" style="left:1156.59px;top:238.07px;font-size:22.03px;color:#fff;font-weight:700;font-style:normal;transform:scaleX(0.9216);-webkit-text-stroke:0.5px #fff;">RUN SCENARIO</span>
<span class="t" style="left:1156.3px;top:267.87px;font-size:21.74px;color:#8c8c8c;font-weight:400;font-style:normal;transform:scaleX(1.0215);-webkit-text-stroke:1.0px #8c8c8c;">Scenario Charlie</span>
<span class="t" style="left:1213.6px;top:305.92px;font-size:25.51px;color:#d6d6d6;font-weight:400;font-style:normal;transform:scaleX(1.0257);-webkit-text-stroke:0.25px #d6d6d6;">A run has started for “Scenario Charlie.”</span>
<span class="t" style="left:1156.59px;top:411.27px;font-size:22.03px;color:#fff;font-weight:700;font-style:normal;transform:scaleX(0.9241);-webkit-text-stroke:0.5px #fff;">SCENARIO DELETED</span>
<span class="t" style="left:1156.3px;top:440.87px;font-size:21.74px;color:#8c8c8c;font-weight:400;font-style:normal;transform:scaleX(1.0447);-webkit-text-stroke:1.0px #8c8c8c;">Scenario India</span>
<span class="t" style="left:1214.35px;top:478.92px;font-size:25.51px;color:#d6d6d6;font-weight:400;font-style:normal;transform:scaleX(1.0264);-webkit-text-stroke:0.25px #d6d6d6;">“Scenario India” has been deleted.</span>
<span class="t" style="left:1156.59px;top:586.17px;font-size:22.03px;color:#f985ab;font-weight:700;font-style:normal;transform:scaleX(0.9256);-webkit-text-stroke:0.5px #f985ab;">RUN FAILED</span>
<span class="t" style="left:1156.3px;top:615.87px;font-size:21.74px;color:#8c8c8c;font-weight:400;font-style:normal;transform:scaleX(1.0165);-webkit-text-stroke:1.0px #8c8c8c;">Scenario Bravo</span>
<span class="t" style="left:1214.85px;top:653.92px;font-size:25.51px;color:#d6d6d6;font-weight:400;font-style:normal;transform:scaleX(1.0402);-webkit-text-stroke:0.25px #d6d6d6;">The run initiated for “Scenario Bravo”</span>
<span class="t" style="left:1214.85px;top:688.92px;font-size:25.51px;color:#d6d6d6;font-weight:400;font-style:normal;transform:scaleX(1.0219);-webkit-text-stroke:0.25px #d6d6d6;">has failed.</span>
<svg style="left:535.5px;top:412px" width="34" height="42" viewBox="0 0 34 42"><g transform="scale(1.94)"><path d="M5 1h2v1h-2zM5 2h2v1h-2zM5 3h2v1h-2zM5 4h2v1h-2zM5 5h2v1h-2zM5 6h2v1h-2zM8 6h2v1h-2zM5 7h2v1h-2zM8 7h2v1h-2zM11 7h2v1h-2zM5 8h2v1h-2zM8 8h2v1h-2zM11 8h2v1h-2zM14 8h1v1h-1zM1 9h2v1h-2zM5 9h2v1h-2zM8 9h2v1h-2zM11 9h2v1h-2zM14 9h2v1h-2zM1 10h3v1h-3zM5 10h8v1h-8zM14 10h2v1h-2zM2 11h2v1h-2zM5 11h11v1h-11zM3 12h1v1h-1zM5 12h11v1h-11zM3 13h13v1h-13zM4 14h12v1h-12zM4 15h12v1h-12zM5 16h10v1h-10zM5 17h10v1h-10zM6 18h8v1h-8zM6 19h8v1h-8z" fill="#fff" stroke="#fff" stroke-width="0.06"/><path d="M5 0h2v1h-2zM4 1h1v1h-1zM7 1h1v1h-1zM4 2h1v1h-1zM7 2h1v1h-1zM4 3h1v1h-1zM7 3h1v1h-1zM4 4h1v1h-1zM7 4h1v1h-1zM4 5h1v1h-1zM7 5h3v1h-3zM4 6h1v1h-1zM7 6h1v1h-1zM10 6h3v1h-3zM4 7h1v1h-1zM7 7h1v1h-1zM10 7h1v1h-1zM13 7h2v1h-2zM0 8h3v1h-3zM4 8h1v1h-1zM7 8h1v1h-1zM10 8h1v1h-1zM13 8h1v1h-1zM15 8h1v1h-1zM0 9h1v1h-1zM3 9h2v1h-2zM7 9h1v1h-1zM10 9h1v1h-1zM13 9h1v1h-1zM16 9h1v1h-1zM0 10h1v1h-1zM4 10h1v1h-1zM13 10h1v1h-1zM16 10h1v1h-1zM1 11h1v1h-1zM4 11h1v1h-1zM16 11h1v1h-1zM2 12h1v1h-1zM4 12h1v1h-1zM16 12h1v1h-1zM2 13h1v1h-1zM16 13h1v1h-1zM3 14h1v1h-1zM16 14h1v1h-1zM3 15h1v1h-1zM16 15h1v1h-1zM4 16h1v1h-1zM15 16h1v1h-1zM4 17h1v1h-1zM15 17h1v1h-1zM5 18h1v1h-1zM14 18h1v1h-1zM5 19h1v1h-1zM14 19h1v1h-1zM5 20h10v1h-10z" fill="#000" stroke="#000" stroke-width="0.06"/></g></svg>
</div></body></html>
